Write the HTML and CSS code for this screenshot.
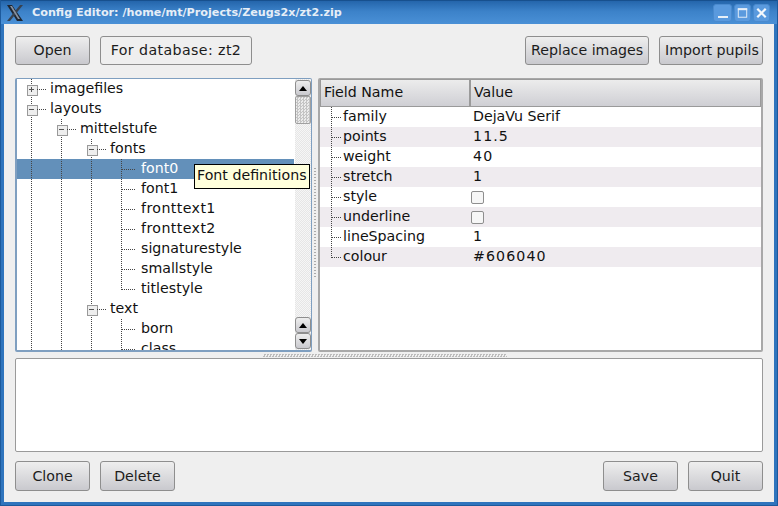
FILE: index.html
```html
<!DOCTYPE html>
<html lang="en">
<head>
	<meta charset="UTF-8">
	<title>Config Editor</title>
	<link rel="stylesheet" href="styles.css">
</head>
<body>
	<div class="window">
		<div class="titlebar">
			<svg class="logo" width="18" height="18" viewBox="0 0 18 18">
				<path d="M1 1 L6 1 L17 17 L11 17 Z" fill="#1f2733"/>
				<path d="M14 1 L17 1 L4 17 L1 17 Z" fill="#39424f"/>
				<path d="M4 2 L6 2 L14 15 L12 15 Z" fill="#8791a0"/>
			</svg>
			<span class="title">Config Editor: /home/mt/Projects/Zeugs2x/zt2.zip</span>
			<div class="winbtns">
				<span class="winbtn wide"><svg width="16" height="16" viewBox="0 0 16 16"><rect x="3" y="11" width="10" height="2" fill="#e8f0f8"/></svg></span>
				<span class="winbtn"><svg width="16" height="16" viewBox="0 0 16 16"><rect x="3.5" y="3.5" width="9" height="9" fill="none" stroke="#e8f0f8"/><rect x="3" y="3" width="10" height="2" fill="#e8f0f8"/></svg></span>
				<span class="winbtn"><svg width="16" height="16" viewBox="0 0 16 16"><path d="M3.5 3.5 L12.5 12.5 M12.5 3.5 L3.5 12.5" stroke="#f4f8fc" stroke-width="2.4"/></svg></span>
			</div>
		</div>
		<div class="content">
			<div class="toolbar">
				<button class="btn">Open</button>
				<button class="btn flat">For database: zt2</button>
				<span class="spacer"></span>
				<button class="btn">Replace images</button>
				<button class="btn">Import pupils</button>
			</div>
			<div class="panes">
				<div class="tree">
					<div class="tree-rows">
						<div class="row"><span class="cell guide knob plus"></span><span class="label">imagefiles</span></div>
						<div class="row"><span class="cell guide knob minus"></span><span class="label">layouts</span></div>
						<div class="row"><span class="cell guide"></span><span class="cell guide knob minus"></span><span class="label">mittelstufe</span></div>
						<div class="row"><span class="cell guide"></span><span class="cell guide"></span><span class="cell guide knob minus"></span><span class="label">fonts</span></div>
						<div class="row selected"><span class="cell guide"></span><span class="cell guide"></span><span class="cell guide"></span><span class="cell guide branch"></span><span class="label">font0</span></div>
						<div class="row"><span class="cell guide"></span><span class="cell guide"></span><span class="cell guide"></span><span class="cell guide branch"></span><span class="label">font1</span></div>
						<div class="row"><span class="cell guide"></span><span class="cell guide"></span><span class="cell guide"></span><span class="cell guide branch"></span><span class="label spaced">fronttext1</span></div>
						<div class="row"><span class="cell guide"></span><span class="cell guide"></span><span class="cell guide"></span><span class="cell guide branch"></span><span class="label spaced">fronttext2</span></div>
						<div class="row"><span class="cell guide"></span><span class="cell guide"></span><span class="cell guide"></span><span class="cell guide branch"></span><span class="label">signaturestyle</span></div>
						<div class="row"><span class="cell guide"></span><span class="cell guide"></span><span class="cell guide"></span><span class="cell guide branch"></span><span class="label">smallstyle</span></div>
						<div class="row"><span class="cell guide"></span><span class="cell guide"></span><span class="cell guide"></span><span class="cell guide branch last"></span><span class="label">titlestyle</span></div>
						<div class="row"><span class="cell guide"></span><span class="cell guide"></span><span class="cell guide knob minus"></span><span class="label">text</span></div>
						<div class="row"><span class="cell guide"></span><span class="cell guide"></span><span class="cell guide"></span><span class="cell guide branch"></span><span class="label">born</span></div>
						<div class="row"><span class="cell guide"></span><span class="cell guide"></span><span class="cell guide"></span><span class="cell guide branch"></span><span class="label">class</span></div>
					</div>
					<div class="scrollbar">
						<span class="sb-btn"><i class="arrow up"></i></span>
						<span class="sb-thumb"></span>
						<span class="sb-gap"></span>
						<span class="sb-btn"><i class="arrow up"></i></span>
						<span class="sb-btn"><i class="arrow down"></i></span>
					</div>
					<div class="tooltip">Font definitions</div>
				</div>
				<div class="vsplit"></div>
				<div class="table">
					<div class="thead">
						<div class="th first">Field Name</div>
						<div class="th">Value</div>
					</div>
					<div class="trow"><div class="td name"><span class="tguide"></span>family</div><div class="td">DejaVu Serif</div></div>
					<div class="trow alt"><div class="td name"><span class="tguide"></span>points</div><div class="td num">11.5</div></div>
					<div class="trow"><div class="td name"><span class="tguide"></span>weight</div><div class="td num">40</div></div>
					<div class="trow alt"><div class="td name"><span class="tguide"></span>stretch</div><div class="td num">1</div></div>
					<div class="trow"><div class="td name"><span class="tguide"></span>style</div><div class="td"><span class="check"></span></div></div>
					<div class="trow alt"><div class="td name"><span class="tguide"></span>underline</div><div class="td"><span class="check"></span></div></div>
					<div class="trow"><div class="td name"><span class="tguide"></span>lineSpacing</div><div class="td num">1</div></div>
					<div class="trow alt"><div class="td name"><span class="tguide last"></span>colour</div><div class="td num">#606040</div></div>
				</div>
			</div>
			<div class="hsplit"><span class="grip"></span></div>
			<div class="textbox"></div>
			<div class="bottombar">
				<button class="btn">Clone</button>
				<button class="btn">Delete</button>
				<span class="spacer"></span>
				<button class="btn">Save</button>
				<button class="btn">Quit</button>
			</div>
		</div>
	</div>
</body>
</html>
```

FILE: styles.css
```css
* { margin:0;padding:0;box-sizing:border-box; }
html, body { width:778px;height:506px;overflow:hidden; }
body { font-family:"DejaVu Sans",sans-serif;font-size:14.2px;color:#111; }

.window { width:778px;height:506px;display:flex;flex-direction:column;padding:0 3px 3px;background:#2f74bd;border-left:1px solid #1d5a9c;border-right:1px solid #1d5a9c;border-bottom:1px solid #1d5a9c; }
.titlebar { height:24px;flex:none;display:flex;align-items:center;margin:0 -3px;padding:0 7px 0 5px;background:linear-gradient(#2465ab,#3c82c9 45%,#4a90d6);border-top:1px solid #17508e; }
.logo { flex:none; }
.title { margin-left:8px;font-size:11.2px;font-weight:bold;color:#e6eef7;white-space:nowrap; }
.winbtns { margin-left:auto;display:flex;gap:2px; }
.winbtn { width:17px;height:18px;display:flex;align-items:center;justify-content:center;border-radius:3px;background:#5a9ade;border:1px solid #4a8ace; }
.winbtn.wide { width:19px; }

.content { flex:1;min-height:0;display:flex;flex-direction:column;padding:12px 11px 10px;background:#efefef; }
.toolbar { height:29px;flex:none;display:flex;gap:10px;margin-bottom:13px; }
.bottombar { height:30px;flex:none;display:flex;gap:10px;margin-top:9px; }
.spacer { flex:1; }
.btn { min-width:75px;padding:0 5px;font:14.2px "DejaVu Sans",sans-serif;color:#1c1c1c;white-space:nowrap;border:1px solid #8e8e8e;border-radius:3px;background:linear-gradient(#eeeeee,#c9c9ce); }
.toolbar .btn { padding-bottom:2px; }
.btn.flat { background:#efefef;width:152px;letter-spacing:.4px; }
.toolbar .btn:nth-of-type(3) { width:124px; }
.toolbar .btn:nth-of-type(4) { width:104px; }

.panes { height:274px;flex:none;display:flex; }
.tree { width:297px;flex:none;position:relative;display:flex;overflow:visible;background:#fff;border:solid #7f9fc0;border-width:1px 2px 2px 2px;border-radius:2px; }
.tree-rows { width:277px;flex:none;height:100%;overflow:hidden; }
.row { height:20px;display:flex;white-space:nowrap; }
.row.selected { background:#6390ba;color:#fff; }
.cell { width:30px;flex:none;position:relative; }
.guide { background:repeating-linear-gradient(to bottom,#444 0 1px,transparent 1px 2px) 14px 0/1px 100% no-repeat; }
.branch { width:31px;background:repeating-linear-gradient(to bottom,#444 0 1px,transparent 1px 2px) 14px 0/1px 100% no-repeat,repeating-linear-gradient(to right,#444 0 1px,transparent 1px 2px) 15px 10px/14px 1px no-repeat; }
.branch.last { background:repeating-linear-gradient(to bottom,#444 0 1px,transparent 1px 2px) 14px 0/1px 11px no-repeat,repeating-linear-gradient(to right,#444 0 1px,transparent 1px 2px) 15px 10px/14px 1px no-repeat; }
.knob::before { content:"";position:absolute;left:10px;top:6px;width:9px;height:9px;background-color:#eee;background-image:linear-gradient(#555,#555);background-size:5px 1px;background-position:1px 3px;background-repeat:no-repeat;border:1px solid #999; }
.knob.plus::before { background-image:linear-gradient(#555,#555),linear-gradient(#555,#555);background-size:5px 1px,1px 5px;background-position:1px 3px,3px 1px; }
.knob::after { content:"";position:absolute;left:20px;top:10px;width:9px;height:1px;background:repeating-linear-gradient(to right,#444 0 1px,transparent 1px 2px); }
.label { margin-left:3px;line-height:19px; }
.label.spaced { letter-spacing:.4px; }

.scrollbar { width:16px;flex:none;display:flex;flex-direction:column;padding:1px 0;background:repeating-conic-gradient(#e6e6e6 0 25%,#f6f6f6 0 50%) 0 0/2px 2px;margin-left:1px; }
.sb-btn { height:16px;flex:none;display:flex;align-items:center;justify-content:center;border:1px solid #8e8e8e;border-radius:3px;background:linear-gradient(#eeeeee,#c9c9ce); }
.sb-thumb { height:28px;flex:none;border:1px solid #a0a0a0;border-radius:2px;background:repeating-conic-gradient(#c4c4c4 0 25%,#ececec 0 50%) 0 0/3px 3px; }
.sb-gap { flex:1; }
.arrow { width:0;height:0;border-left:4px solid transparent;border-right:4px solid transparent; }
.arrow.up { border-bottom:5px solid #000; }
.arrow.down { border-top:5px solid #000; }

.tooltip { position:absolute;left:177px;top:85px;width:116px;height:25px;padding-left:2px;line-height:21px;white-space:nowrap;background:#ffffdc;border:1px solid #000;color:#111; }

.vsplit { width:6px;flex:none;background:repeating-linear-gradient(to bottom,#aaa 0 1px,transparent 1px 3px) 2px 90px/2px 110px no-repeat; }
.table { flex:1;background:#fff;border:2px solid #a8a8a8;border-width:1px 2px 2px 2px;border-radius:2px;overflow:hidden; }
.thead { height:28px;display:flex; }
.th { flex:1;display:flex;align-items:center;padding:0 0 2px 3px;border:1px solid #9a9a9a;background:linear-gradient(#ececec,#cfcfd4); }
.th.first { width:150px;flex:none; }
.trow { height:20px;display:flex;line-height:19px; }
.trow.alt { background:#efebef; }
.td { flex:1;padding:0 0 2px 3px;display:flex;align-items:center; }
.td.num { letter-spacing:1.1px; }
.td.name { width:150px;flex:none;padding-left:0; }
.tguide { width:23px;height:20px;flex:none;margin-bottom:-2px;background:repeating-linear-gradient(to bottom,#444 0 1px,transparent 1px 2px) 11px 0/1px 100% no-repeat,repeating-linear-gradient(to right,#444 0 1px,transparent 1px 2px) 12px 10px/9px 1px no-repeat; }
.tguide.last { background:repeating-linear-gradient(to bottom,#444 0 1px,transparent 1px 2px) 11px 0/1px 11px no-repeat,repeating-linear-gradient(to right,#444 0 1px,transparent 1px 2px) 12px 10px/9px 1px no-repeat; }
.check { width:13px;height:13px;margin:2px 0 0 -2px;border:1px solid #8e8e8e;border-radius:2px;background:#f6f6f6; }

.hsplit { height:6px;flex:none;display:flex;justify-content:center;align-items:center; }
.grip { width:244px;height:3px;margin-right:8px;background:repeating-conic-gradient(#bbb 0 25%,transparent 0 50%) 0 0/3px 3px; }
.textbox { height:94px;flex:none;background:#fff;border:1px solid #9a9a9a;border-radius:2px; }
```
